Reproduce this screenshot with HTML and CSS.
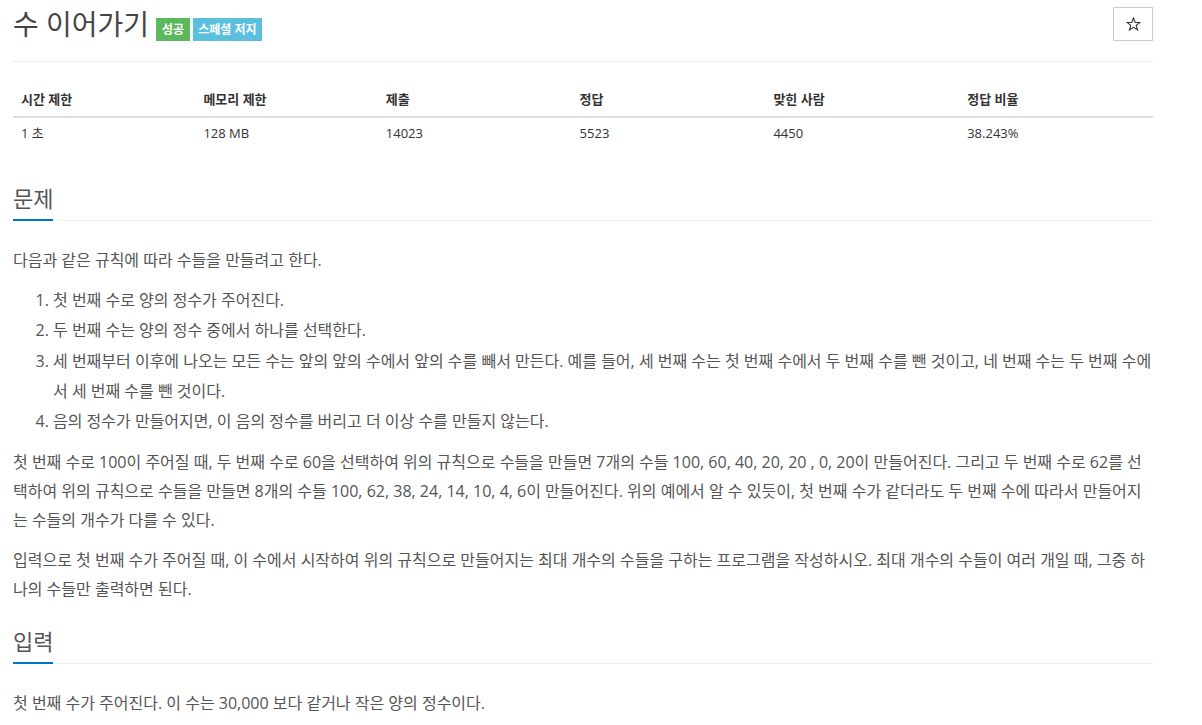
FILE: index.html
```html
<!DOCTYPE html>
<html lang="ko">
<head>
<meta charset="utf-8">
<title>수 이어가기</title>
<link rel="stylesheet" href="styles.css">
</head>
<body>
<div class="container">
  <div class="page-header">
    <h1 class="title">수 이어가기<span class="label label-success">성공</span><span class="label label-info">스페셜 저지</span></h1>
    <button class="star-btn" type="button" aria-label="즐겨찾기">
      <svg class="star-icon" width="15" height="14" viewBox="0 0 15 14" aria-hidden="true">
        <polygon points="7.5,1 9.2,5.4 13.9,5.5 10.2,8.4 11.5,12.9 7.5,10.3 3.5,12.9 4.8,8.4 1.1,5.5 5.8,5.4" fill="none" stroke="#333" stroke-width="1.1" stroke-linejoin="miter"/>
      </svg>
    </button>
  </div>

  <table class="info-table">
    <thead>
      <tr>
        <th class="col-a">시간 제한</th>
        <th class="col-a">메모리 제한</th>
        <th class="col-b">제출</th>
        <th class="col-b">정답</th>
        <th class="col-b">맞힌 사람</th>
        <th class="col-b">정답 비율</th>
      </tr>
    </thead>
    <tbody>
      <tr>
        <td>1 초 </td>
        <td>128 MB</td>
        <td>14023</td>
        <td>5523</td>
        <td>4450</td>
        <td>38.243%</td>
      </tr>
    </tbody>
  </table>

  <section class="section">
    <div class="headline"><h2>문제</h2></div>
    <div class="problem-text">
      <p>다음과 같은 규칙에 따라 수들을 만들려고 한다.</p>
      <ol>
        <li>첫 번째 수로 양의 정수가 주어진다.</li>
        <li>두 번째 수는 양의 정수 중에서 하나를 선택한다.</li>
        <li>세 번째부터 이후에 나오는 모든 수는 앞의 앞의 수에서 앞의 수를 빼서 만든다. 예를 들어, 세 번째 수는 첫 번째 수에서 두 번째 수를 뺀 것이고, 네 번째 수는 두 번째 수에서 세 번째 수를 뺀 것이다.</li>
        <li>음의 정수가 만들어지면, 이 음의 정수를 버리고 더 이상 수를 만들지 않는다.</li>
      </ol>
      <p>첫 번째 수로 100이 주어질 때, 두 번째 수로 60을 선택하여 위의 규칙으로 수들을 만들면 7개의 수들 100, 60, 40, 20, 20 , 0, 20이 만들어진다. 그리고 두 번째 수로 62를 선택하여 위의 규칙으로 수들을 만들면 8개의 수들 100, 62, 38, 24, 14, 10, 4, 6이 만들어진다. 위의 예에서 알 수 있듯이, 첫 번째 수가 같더라도 두 번째 수에 따라서 만들어지는 수들의 개수가 다를 수 있다.</p>
      <p>입력으로 첫 번째 수가 주어질 때, 이 수에서 시작하여 위의 규칙으로 만들어지는 최대 개수의 수들을 구하는 프로그램을 작성하시오. 최대 개수의 수들이 여러 개일 때, 그중 하나의 수들만 출력하면 된다.</p>
    </div>
  </section>

  <section class="section">
    <div class="headline"><h2>입력</h2></div>
    <div class="problem-text">
      <p>첫 번째 수가 주어진다. 이 수는 30,000 보다 같거나 작은 양의 정수이다.</p>
    </div>
  </section>
</div>
</body>
</html>
```

FILE: styles.css
```css
html, body {
  margin: 0;
  padding: 0;
  background: #fff;
}

body {
  font-family: "Open Sans", "Noto Sans CJK KR", sans-serif;
  color: #555;
  padding-left: 13px;
}

.container {
  width: 1140px;
}

.page-header {
  display: flex;
  justify-content: space-between;
  align-items: flex-start;
  padding: 7px 0 20px;
  border-bottom: 1px solid #eee;
}

.title {
  margin: 1px 0 0;
  font-size: 28px;
  line-height: 32px;
  font-weight: 400;
  color: #444;
}

.label {
  display: inline-block;
  font-size: 12px;
  line-height: 17px;
  padding: 3px 6px;
  font-weight: 700;
  color: #fff;
  vertical-align: 1px;
}

.label-success {
  background: #5cb85c;
  margin-left: 7px;
}

.label-info {
  background: #5bc0de;
  margin-left: 3px;
  padding: 3px 5px;
}

.star-btn {
  display: flex;
  align-items: center;
  justify-content: center;
  width: 40px;
  height: 34px;
  margin: 0;
  padding: 0;
  border: 1px solid #ccc;
  border-radius: 0;
  background: #fff;
}

.star-icon {
  display: block;
}

.info-table {
  width: 100%;
  margin: 18px 0 34px;
  border-collapse: collapse;
  border-spacing: 0;
  font-size: 13px;
  color: #333;
}

.info-table .col-a {
  width: 16%;
}

.info-table .col-b {
  width: 17%;
}

.info-table th {
  text-align: left;
  font-weight: 700;
  padding: 9px 8px 7px;
  line-height: 20px;
  border-bottom: 2px solid #ddd;
}

.info-table td {
  text-align: left;
  padding: 5px 8px 9px;
  line-height: 20px;
}

.section {
  margin: 0;
}

.headline {
  margin: 0 0 25px;
  border-bottom: 1px dotted #dfe6ee;
}

.headline h2 {
  display: inline-block;
  margin: 0 0 -1px;
  padding: 0 0 9px;
  font-size: 22px;
  line-height: 24px;
  font-weight: 400;
  color: #555;
  border-bottom: 2px solid #0076c0;
}

.section + .section .headline {
  margin-top: 25px;
}

.problem-text {
  font-size: 16px;
  line-height: 29px;
  word-break: break-all;
}

.problem-text p {
  margin: 0 0 11px;
}

.problem-text ol {
  margin: -1px 0 12px;
  padding-left: 40px;
}

.problem-text li {
  line-height: 30.25px;
}
```
